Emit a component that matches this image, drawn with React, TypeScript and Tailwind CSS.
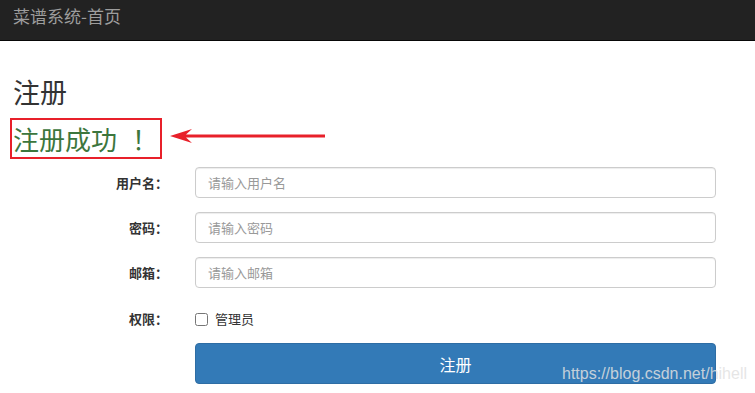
export default function App() {
  const fields = [
    { label: '用户名：', placeholder: '请输入用户名', type: 'text' },
    { label: '密码：', placeholder: '请输入密码', type: 'password' },
    { label: '邮箱：', placeholder: '请输入邮箱', type: 'email' },
  ];

  return (
    <div
      className="relative w-[755px] h-[393px] overflow-hidden bg-white text-[#333]"
      style={{ fontFamily: '"Noto Sans CJK SC", "Liberation Sans", sans-serif' }}
    >
      {/* top navbar */}
      <nav className="h-[41px] bg-[#222] border-b border-[#080808] flex items-center px-[13px]">
        <span className="text-[17px] leading-none text-[#9d9d9d] -mt-[10px]">菜谱系统-首页</span>
      </nav>

      <div className="pl-[13px]">
        <h2 className="mt-[36px] text-[27px] leading-[30px] text-[#333]">注册</h2>

        <div className="mt-[11px] flex items-center">
          <div className="-ml-[3px] w-[152px] h-[41px] border-2 border-[#e8202a] flex items-center pl-[1px]">
            <span className="text-[26px] leading-none text-[#3c763d] whitespace-nowrap">
              注册成功<span className="ml-[15px]">！</span>
            </span>
          </div>
          <svg width="160" height="16" viewBox="0 0 160 16" className="ml-[6px] -mt-[6px]">
            <path d="M2 8 L24 1 L18 6.5 L157 6.5 L157 9.5 L18 9.5 L24 15 Z" fill="#e8202a" />
          </svg>
        </div>

        <form className="mt-[8px] flex flex-col">
          {fields.map(f => (
            <div key={f.label} className="flex items-center h-[31px] mb-[14px]">
              <label className="w-[155px] text-right text-[13px] font-bold text-[#333] leading-none">{f.label}</label>
              <input
                type={f.type}
                placeholder={f.placeholder}
                className="ml-[27px] w-[521px] h-[31px] rounded-[4px] border border-[#ccc] px-[12px] text-[13px] text-[#555] placeholder:text-[#999] outline-none shadow-[inset_0_1px_1px_rgba(0,0,0,0.075)]"
              />
            </div>
          ))}

          <div className="flex items-center h-[20px] mt-[6px]">
            <label className="w-[155px] text-right text-[13px] font-bold leading-none">权限：</label>
            <label className="ml-[27px] flex items-center text-[13px] leading-none">
              <input type="checkbox" className="w-[13px] h-[13px] m-0 mt-[2px]" />
              <span className="ml-[7px]">管理员</span>
            </label>
          </div>

          <button
            type="button"
            className="ml-[182px] mt-[15px] w-[521px] h-[41px] rounded-[4px] bg-[#337ab7] border border-[#2e6da4] text-white text-[16px] leading-none"
          >
            注册
          </button>
        </form>
      </div>

      {/* watermark */}
      <span
        className="absolute left-[562px] top-[364px] text-[16px] leading-[20px] text-[rgba(225,225,225,0.85)] whitespace-nowrap"
        style={{ fontFamily: '"Liberation Sans", Arial, sans-serif' }}
      >
        https://blog.csdn.net/hihell
      </span>
    </div>
  );
}
